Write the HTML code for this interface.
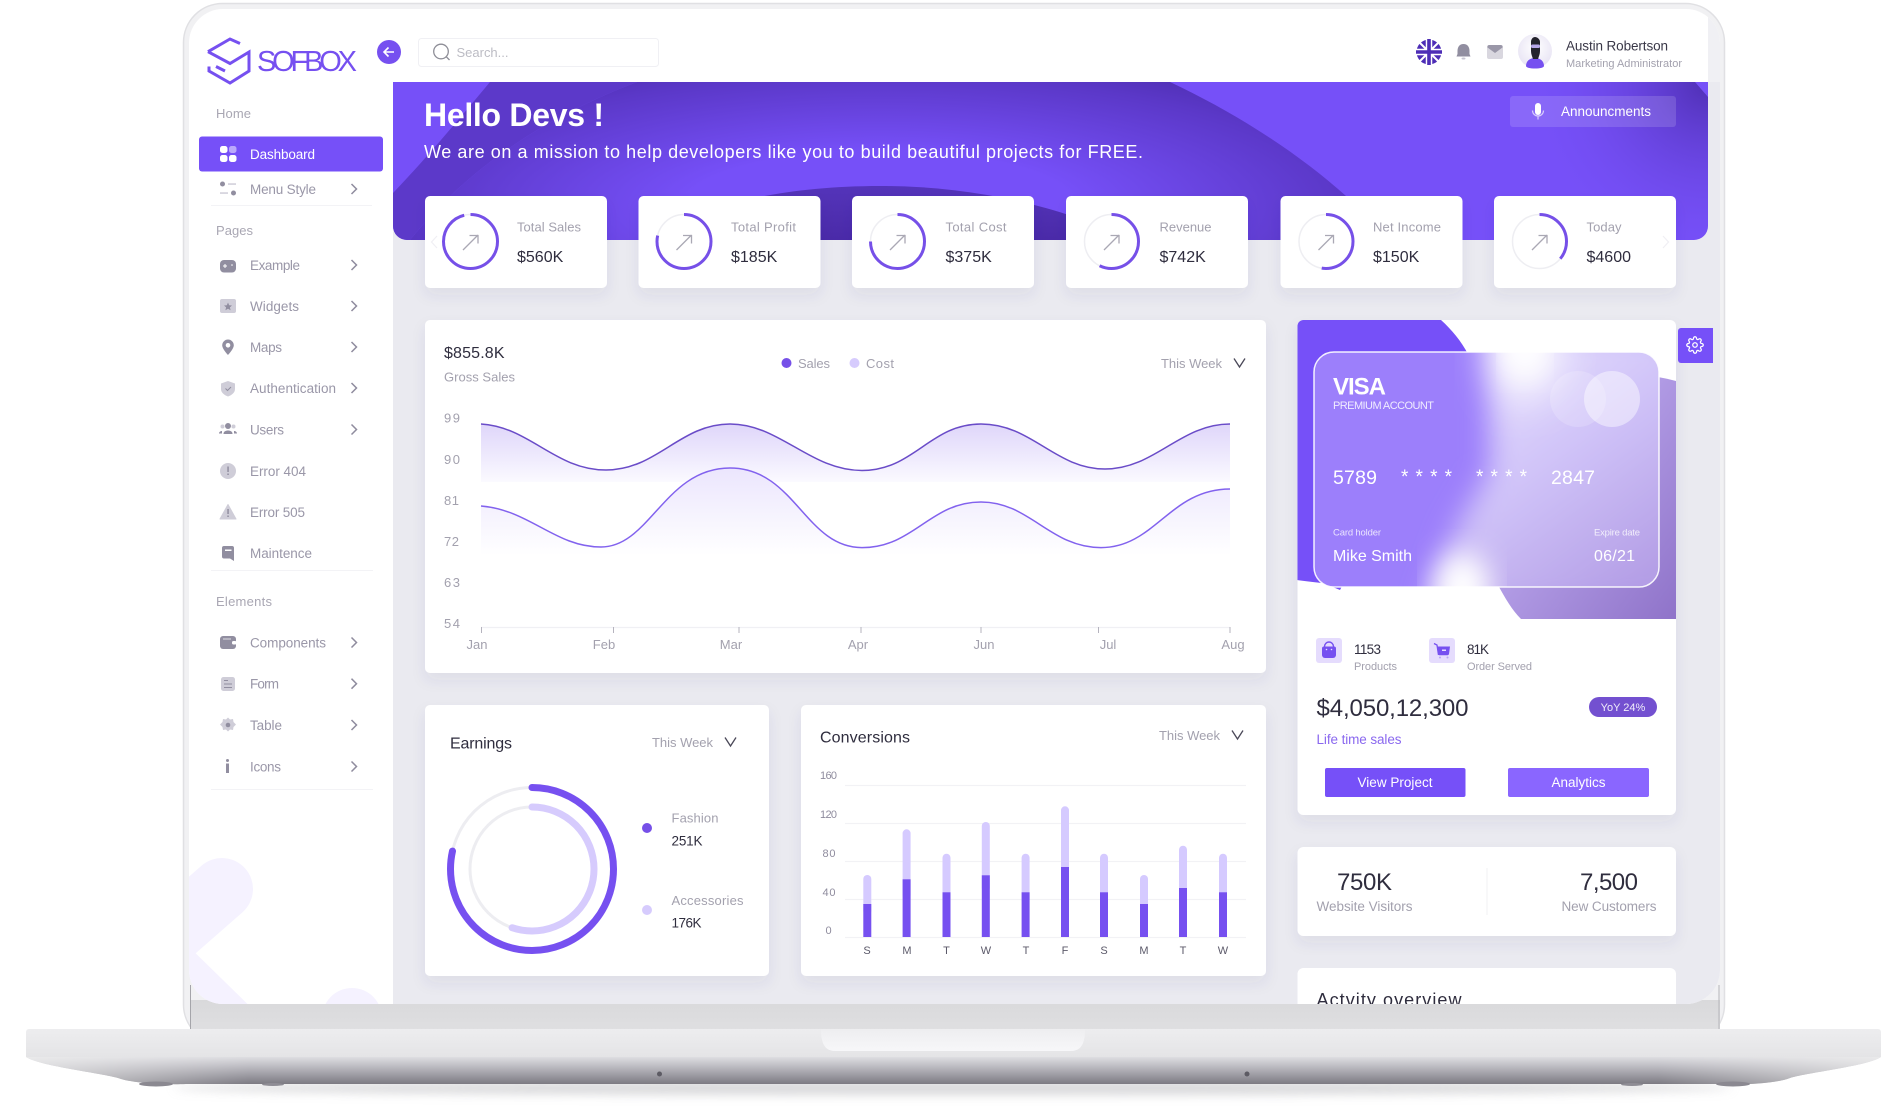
<!DOCTYPE html>
<html lang="en"><head><meta charset="utf-8"><title>Sofbox Dashboard</title>
<style>
html,body{margin:0;padding:0;background:#fff;width:1887px;height:1106px;overflow:hidden}
svg{display:block;filter:blur(.3px)}
text{font-family:"Liberation Sans",sans-serif}
.h{font-size:13px;fill:#a9a7b3}
.m{font-size:13.5px;fill:#9a97a8}
.g{font-size:13px;fill:#a3a1ae}
.d{font-size:16px;fill:#2f2d3e}
.w{fill:#fff}
.ch{fill:none;stroke:#8f8c9e;stroke-width:1.5}
.ic{fill:#918ea0}
.il{fill:#cfcdd8}
.ar{fill:none;stroke:#aaa8b4;stroke-width:1.3}
.mid{text-anchor:middle}
</style></head><body>
<svg width="1887" height="1106" viewBox="0 0 1887 1106" xmlns="http://www.w3.org/2000/svg">
<defs>
<filter id="sh" x="-20%" y="-20%" width="140%" height="150%"><feDropShadow dx="0" dy="7" stdDeviation="7" flood-color="#4c4c78" flood-opacity=".08"/></filter>
<filter id="b25" x="-60%" y="-60%" width="220%" height="220%"><feGaussianBlur stdDeviation="22"/></filter>
<filter id="b15" x="-30%" y="-30%" width="160%" height="160%"><feGaussianBlur stdDeviation="14"/></filter>
<filter id="b6" x="-10%" y="-100%" width="120%" height="300%"><feGaussianBlur stdDeviation="5"/></filter>
<clipPath id="screen"><rect x="189" y="9" width="1531" height="995" rx="34"/></clipPath>
<clipPath id="scr2"><rect x="170" y="0" width="1560" height="1004"/></clipPath>
<clipPath id="ban"><path d="M393 82H1708V226a14 14 0 0 1-14 14H407a14 14 0 0 1-14-14Z"/></clipPath>
<clipPath id="cardc"><rect x="1297.5" y="320" width="378.5" height="495" rx="6"/></clipPath>
<clipPath id="glass"><rect x="1314" y="352" width="345" height="235" rx="20"/></clipPath>
<radialGradient id="domeG" gradientUnits="userSpaceOnUse" cx="0" cy="0" r="1" gradientTransform="translate(880 205) scale(640 180)">
<stop offset="0" stop-color="#7650f8"/><stop offset=".3" stop-color="#7650f8"/><stop offset=".72" stop-color="#5b38c8"/><stop offset="1" stop-color="#43269e"/></radialGradient>
<radialGradient id="cornerG" gradientUnits="userSpaceOnUse" cx="1708" cy="82" r="185">
<stop offset="0" stop-color="#4f2fb4"/><stop offset="1" stop-color="#7650f8" stop-opacity="0"/></radialGradient>
<linearGradient id="dome2" x1="0" y1="0" x2="0" y2="1"><stop offset="0" stop-color="#5434ba"/><stop offset="1" stop-color="#4a2aa8"/></linearGradient>
<linearGradient id="rs" x1="0" y1="0" x2="1" y2="1"><stop offset="0" stop-color="#cdbcfb"/><stop offset="1" stop-color="#8f73c9"/></linearGradient>
<linearGradient id="grad1" gradientUnits="userSpaceOnUse" x1="0" y1="424" x2="0" y2="482"><stop offset="0" stop-color="#dfd6fa"/><stop offset="1" stop-color="#fbfaff"/></linearGradient>
<linearGradient id="grad2" gradientUnits="userSpaceOnUse" x1="0" y1="466" x2="0" y2="555"><stop offset="0" stop-color="#ebe5fd"/><stop offset="1" stop-color="#fff"/></linearGradient>
<linearGradient id="rz" x1="0" y1="0" x2=".7" y2="1"><stop offset="0" stop-color="#f0ecff"/><stop offset=".55" stop-color="#cfc2f8"/><stop offset="1" stop-color="#b39de5"/></linearGradient>
<linearGradient id="under" x1="0" y1="0" x2="0" y2="1"><stop offset="0" stop-color="#dcdce0"/><stop offset=".3" stop-color="#bcbbc2"/><stop offset="1" stop-color="#6e6c75"/></linearGradient>
<linearGradient id="underH" x1="0" y1="0" x2="1" y2="0"><stop offset="0" stop-color="#eee" stop-opacity=".75"/><stop offset=".12" stop-color="#eee" stop-opacity=".1"/><stop offset=".88" stop-color="#eee" stop-opacity=".1"/><stop offset="1" stop-color="#eee" stop-opacity=".75"/></linearGradient>
<linearGradient id="baseT" x1="0" y1="0" x2="0" y2="1"><stop offset="0" stop-color="#ededef"/><stop offset="1" stop-color="#e4e4e6"/></linearGradient>
<linearGradient id="notch" x1="0" y1="0" x2="0" y2="1"><stop offset="0" stop-color="#eeeef0"/><stop offset="1" stop-color="#f7f7f9"/></linearGradient>
<linearGradient id="chin" x1="0" y1="0" x2="0" y2="1"><stop offset="0" stop-color="#d9d9db"/><stop offset="1" stop-color="#dfdfe1"/></linearGradient>
<radialGradient id="av" cx=".5" cy=".4" r=".6"><stop offset="0" stop-color="#fff"/><stop offset="1" stop-color="#e8e4f4"/></radialGradient>
</defs>

<!-- base shadow -->
<ellipse cx="953" cy="1088" rx="780" ry="7" fill="#b8b8bc" opacity=".55" filter="url(#b6)"/>

<!-- lid -->
<rect x="183.5" y="3.5" width="1541" height="1040" rx="39" fill="#f1f1f3" stroke="#e0e0e3" stroke-width="1.5"/>
<rect x="190" y="1000" width="1530" height="30" fill="url(#chin)"/>
<line x1="190.500" y1="985" x2="190.500" y2="1030" stroke="#a5a5aa" stroke-width="1"/>
<line x1="1719" y1="985" x2="1719" y2="1030" stroke="#b5b5ba" stroke-width="1"/>

<!-- screen -->
<g clip-path="url(#screen)">
<rect x="189" y="9" width="1531" height="995" fill="#fff"/>
<rect x="393" y="82" width="1327" height="922" fill="#eaeaf0"/>
<rect x="1708" y="9" width="12" height="73" fill="#f0f0f4"/>
<polyline points="222,889 150,952 240,1040" fill="none" stroke="#f5f2ff" stroke-width="62" stroke-linecap="round" stroke-linejoin="miter" clip-path="url(#sidec)"/>
<circle cx="352" cy="1018" r="30" fill="#f5f2ff"/>
<rect x="393" y="900" width="8" height="110" fill="#eaeaf0"/>

<!-- banner -->
<g clip-path="url(#ban)">
<rect x="393" y="82" width="1315" height="158" fill="#7650f8"/>
<path d="M490 82C450 130 420 165 393 193V240H410C470 165 550 115 637 82Z" fill="#5c39c9"/>
<path d="M637 82H1170C1240 115 1300 155 1346 196V240H410C470 165 550 115 637 82Z" fill="url(#domeG)"/>
<path d="M640 240C680 215 760 186 880 186C970 186 1060 205 1130 240Z" fill="url(#dome2)"/>
<rect x="1500" y="82" width="208" height="158" fill="url(#cornerG)"/>
<path d="M1695 82H1708V97Z" fill="#7650f8"/>
</g>
<text x="424" y="126" class="w" font-size="32" font-weight="700" textLength="180">Hello Devs !</text>
<text x="424" y="158" class="w" font-size="18" textLength="719">We are on a mission to help developers like you to build beautiful projects for FREE.</text>
<rect x="1510" y="96" width="166" height="31" rx="3" fill="#fff" opacity=".14"/>
<rect x="1535" y="103" width="6" height="12" rx="3" fill="#fff"/>
<path d="M1532.500 110.500a5.500 5.500 0 0 0 11 0M1538 116v3.500" fill="none" stroke="#d8cdfc" stroke-width="1.200"/>
<text x="1561" y="116" class="w" font-size="13.5" textLength="90">Announcments</text>

<!-- stat cards -->
<g fill="#fff" filter="url(#sh)">
<rect x="425" y="196" width="182" height="92" rx="5"/>
<rect x="638.500" y="196" width="182" height="92" rx="5"/>
<rect x="852" y="196" width="182" height="92" rx="5"/>
<rect x="1066" y="196" width="182" height="92" rx="5"/>
<rect x="1280.500" y="196" width="182" height="92" rx="5"/>
<rect x="1494" y="196" width="182" height="92" rx="5"/>
</g>
<g fill="none" stroke="#eeeef2" stroke-width="1.500">
<circle cx="470.500" cy="241.500" r="27"/><circle cx="684" cy="241.500" r="27"/><circle cx="897.500" cy="241.500" r="27"/><circle cx="1111.500" cy="241.500" r="27"/><circle cx="1326" cy="241.500" r="27"/><circle cx="1539.500" cy="241.500" r="27"/>
</g>
<g fill="none" stroke="#7650e8" stroke-width="3">
<circle cx="470.500" cy="241.500" r="27" stroke-dasharray="163 170" transform="rotate(-90 470.500 241.500)"/>
<circle cx="684" cy="241.500" r="27" stroke-dasharray="133 170" transform="rotate(-90 684 241.500)"/>
<circle cx="897.500" cy="241.500" r="27" stroke-dasharray="127 170" transform="rotate(-90 897.500 241.500)"/>
<circle cx="1111.500" cy="241.500" r="27" stroke-dasharray="97 170" transform="rotate(-90 1111.500 241.500)"/>
<circle cx="1326" cy="241.500" r="27" stroke-dasharray="89 170" transform="rotate(-90 1326 241.500)"/>
<circle cx="1539.500" cy="241.500" r="27" stroke-dasharray="61 170" transform="rotate(-90 1539.500 241.500)"/>
</g>
<g class="ar">
<path d="M463 250 478 235M469.500 235.500H478V243.500"/>
<path d="M676.500 250 691.500 235M683 235.500H691.500V243.500"/>
<path d="M890 250 905 235M896.500 235.500H905V243.500"/>
<path d="M1104 250 1119 235M1110.500 235.500H1119V243.500"/>
<path d="M1318.500 250 1333.500 235M1325 235.500H1333.500V243.500"/>
<path d="M1532 250 1547 235M1538.500 235.500H1547V243.500"/>
</g>
<path d="M437 236 431.500 242 437 248" fill="none" stroke="#f0eff4" stroke-width="1.200"/>
<path d="M1663 236 1668.500 242 1663 248" fill="none" stroke="#f0eff4" stroke-width="1.200"/>
<text x="517" y="231.500" class="g" textLength="64">Total Sales</text><text x="517" y="262" class="d">$560K</text>
<text x="731" y="231.500" class="g" textLength="65">Total Profit</text><text x="731" y="262" class="d">$185K</text>
<text x="945.500" y="231.500" class="g" textLength="61">Total Cost</text><text x="945.500" y="262" class="d">$375K</text>
<text x="1159.500" y="231.500" class="g" textLength="52">Revenue</text><text x="1159.500" y="262" class="d">$742K</text>
<text x="1373" y="231.500" class="g" textLength="68">Net Income</text><text x="1373" y="262" class="d">$150K</text>
<text x="1586.500" y="231.500" class="g" textLength="35">Today</text><text x="1586.500" y="262" class="d">$4600</text>

<!-- main chart -->
<rect x="425" y="320" width="841" height="353" rx="5" fill="#fff" filter="url(#sh)"/>
<text x="444" y="358" class="d" textLength="60.500">$855.8K</text>
<text x="444" y="381.500" class="g" textLength="71">Gross Sales</text>
<circle cx="786.500" cy="363" r="5" fill="#7650e8"/><text x="798" y="368" class="g" textLength="32">Sales</text>
<circle cx="854.500" cy="363" r="5" fill="#d6cbfd"/><text x="866" y="368" class="g" textLength="28">Cost</text>
<text x="1161" y="368" class="g" textLength="61">This Week</text>
<path d="M1234 358.500 1239.500 367 1245 358.500" fill="none" stroke="#4a4858" stroke-width="1.300"/>
<g class="g"><text x="444" y="422.500" textLength="16">99</text><text x="444" y="464" textLength="16">90</text><text x="444" y="505" textLength="15">81</text><text x="444" y="546" textLength="15">72</text><text x="444" y="587" textLength="16">63</text><text x="444" y="628" textLength="16">54</text></g>
<path d="M481 482V424C530 427 555 470 606 470C657 470 680 424 730 424C780 424 810 470.500 862 470.500C914 470.500 930 424 981 424C1032 424 1055 469 1105 469C1155 469 1180 424 1230 424V482Z" fill="url(#grad1)"/>
<path d="M481 555V506C530 510 555 547 601 547C650 547 665 468 730 468C795 468 805 547.600 862 547.600C914 547.600 930 502 981 502C1030 502 1050 547.600 1101 547.600C1155 547.600 1170 489 1230 489V555Z" fill="url(#grad2)"/>
<path d="M481 424C530 427 555 470 606 470C657 470 680 424 730 424C780 424 810 470.500 862 470.500C914 470.500 930 424 981 424C1032 424 1055 469 1105 469C1155 469 1180 424 1230 424" fill="none" stroke="#6a4cc8" stroke-width="1.500"/>
<path d="M481 506C530 510 555 547 601 547C650 547 665 468 730 468C795 468 805 547.600 862 547.600C914 547.600 930 502 981 502C1030 502 1050 547.600 1101 547.600C1155 547.600 1170 489 1230 489" fill="none" stroke="#8262ee" stroke-width="1.500"/>
<line x1="481" y1="627.500" x2="1230" y2="627.500" stroke="#f0f0f4" stroke-width="1.200"/>
<path d="M481.500 627v6M613.500 627v6M739 627v6M861 627v6M981 627v6M1098.500 627v6M1230 627v6" stroke="#b5b3be" stroke-width="1"/>
<g class="g mid"><text x="477" y="649">Jan</text><text x="604" y="649">Feb</text><text x="731" y="649">Mar</text><text x="858" y="649">Apr</text><text x="984" y="649">Jun</text><text x="1108" y="649">Jul</text><text x="1233" y="649">Aug</text></g>

<!-- earnings -->
<rect x="425" y="705" width="344" height="271" rx="5" fill="#fff" filter="url(#sh)"/>
<text x="450" y="748.500" class="d" font-weight="400" textLength="62">Earnings</text>
<text x="652" y="747" class="g" textLength="61">This Week</text>
<path d="M725 737.500 730.500 746 736 737.500" fill="none" stroke="#4a4858" stroke-width="1.300"/>
<circle cx="532" cy="869" r="81.500" fill="none" stroke="#ededf1" stroke-width="3"/>
<circle cx="532" cy="869" r="81.500" fill="none" stroke="#7650f0" stroke-width="7" stroke-linecap="round" stroke-dasharray="402 520" transform="rotate(-90 532 869)"/>
<circle cx="532" cy="869" r="62" fill="none" stroke="#ededf1" stroke-width="3"/>
<circle cx="532" cy="869" r="62" fill="none" stroke="#d6cbfd" stroke-width="7" stroke-linecap="round" stroke-dasharray="215 400" transform="rotate(-90 532 869)"/>
<circle cx="647" cy="828" r="5" fill="#7650e8"/><circle cx="647" cy="910" r="5" fill="#d6cbfd"/>
<text x="671.500" y="822.500" class="g" textLength="47">Fashion</text>
<text x="671.500" y="845.500" font-size="13.500" fill="#2f2d3e" textLength="31">251K</text>
<text x="671.500" y="905" class="g" textLength="72">Accessories</text>
<text x="671.500" y="927.500" font-size="13.500" fill="#2f2d3e" textLength="30">176K</text>

<!-- conversions -->
<rect x="801" y="705" width="465" height="271" rx="5" fill="#fff" filter="url(#sh)"/>
<text x="820" y="742.500" class="d" textLength="90">Conversions</text>
<text x="1159" y="740" class="g" textLength="61">This Week</text>
<path d="M1232 730.500 1237.500 739 1243 730.500" fill="none" stroke="#4a4858" stroke-width="1.300"/>
<g font-size="11" fill="#8f8c9e"><text x="820" y="779" textLength="17">160</text><text x="820" y="818" textLength="17">120</text><text x="822.500" y="857" textLength="13">80</text><text x="822.500" y="896" textLength="13">40</text><text x="825.500" y="934">0</text></g>
<path d="M845 785.500H1246M845 823.500H1246M845 861.500H1246M845 899.500H1246M845 937.500H1246" stroke="#f2f2f5" stroke-width="1.200"/>
<g fill="#d5caff">
<rect x="863.300" y="875" width="8" height="40" rx="4"/><rect x="902.600" y="829.300" width="8" height="70" rx="4"/><rect x="942.500" y="853.700" width="8" height="50" rx="4"/><rect x="981.800" y="822" width="8" height="70" rx="4"/><rect x="1021.600" y="853.700" width="8" height="50" rx="4"/><rect x="1061" y="806.300" width="8" height="80" rx="4"/><rect x="1100" y="853.700" width="8" height="50" rx="4"/><rect x="1140" y="875" width="8" height="40" rx="4"/><rect x="1179" y="845.700" width="8" height="60" rx="4"/><rect x="1219" y="853.700" width="8" height="50" rx="4"/>
</g>
<g fill="#7650f0">
<rect x="863.300" y="904" width="8" height="33"/><rect x="902.600" y="879.300" width="8" height="57.700"/><rect x="942.500" y="892.300" width="8" height="44.700"/><rect x="981.800" y="875.300" width="8" height="61.700"/><rect x="1021.600" y="892.300" width="8" height="44.700"/><rect x="1061" y="867" width="8" height="70"/><rect x="1100" y="892.300" width="8" height="44.700"/><rect x="1140" y="904" width="8" height="33"/><rect x="1179" y="888" width="8" height="49"/><rect x="1219" y="892.300" width="8" height="44.700"/>
</g>
<g font-size="11" fill="#5c5a6a" class="mid"><text x="867" y="954">S</text><text x="907" y="954">M</text><text x="946.500" y="954">T</text><text x="986" y="954">W</text><text x="1026" y="954">T</text><text x="1065" y="954">F</text><text x="1104" y="954">S</text><text x="1144" y="954">M</text><text x="1183" y="954">T</text><text x="1223" y="954">W</text></g>

<!-- right column -->
<rect x="1297.500" y="320" width="378.500" height="495" rx="6" fill="#fff" filter="url(#sh)"/>
<g clip-path="url(#cardc)">
<path d="M1297 320H1441C1452 330 1461 341 1468 354L1340 590 1323 583C1313 582 1305 581 1297 580Z" fill="#7650f8"/>
<path d="M1650 376C1660 377 1668 379 1676 381V619H1521C1512 610 1505 598 1498 585Z" fill="url(#rs)"/>
</g>
<g clip-path="url(#glass)">
<rect x="1314" y="352" width="345" height="235" fill="#9c7ffb"/>
<path d="M1490 330H1690V610H1425L1455 530 1490 470Z" fill="url(#rz)" filter="url(#b15)"/>
<ellipse cx="1525" cy="345" rx="32" ry="52" fill="#fff" filter="url(#b25)"/>
<ellipse cx="1525" cy="345" rx="18" ry="30" fill="#fff" filter="url(#b15)"/>
<ellipse cx="1462" cy="590" rx="28" ry="38" fill="#fff" filter="url(#b15)"/>
<circle cx="1578" cy="399" r="28" fill="#fff" opacity=".18"/>
<circle cx="1612" cy="399" r="28" fill="#fff" opacity=".45"/>
</g>
<rect x="1314" y="352" width="345" height="235" rx="20" fill="none" stroke="#fff" stroke-opacity=".9" stroke-width="1.500"/>
<text x="1333" y="394.500" class="w" font-size="24" font-weight="700" textLength="53">VISA</text>
<text x="1333" y="409" class="w" font-size="11" fill-opacity=".85" textLength="101">PREMIUM ACCOUNT</text>
<text x="1333" y="484" class="w" font-size="19.500" textLength="44">5789</text>
<text x="1401" y="483" class="w" font-size="19" textLength="51">****</text>
<text x="1476" y="483" class="w" font-size="19" textLength="51">****</text>
<text x="1551" y="484" class="w" font-size="19.500" textLength="44">2847</text>
<text x="1333" y="535.500" class="w" font-size="9.500" fill-opacity=".8" textLength="48">Card holder</text>
<text x="1594" y="535.500" class="w" font-size="9.500" fill-opacity=".8" textLength="46">Expire date</text>
<text x="1333" y="561" class="w" font-size="16" textLength="79">Mike Smith</text>
<text x="1594" y="561" class="w" font-size="16" textLength="41">06/21</text>

<path d="M1681 328H1713V363H1681A3 3 0 0 1 1678 360V331A3 3 0 0 1 1681 328Z" fill="#7650f8"/>
<g transform="translate(1686 336) scale(.75)" fill="none" stroke="#fff" stroke-width="1.700" stroke-linejoin="round"><circle cx="12" cy="12" r="3"/><path d="M19.400 15a1.650 1.650 0 0 0 .33 1.820l.06.06a2 2 0 0 1 0 2.830 2 2 0 0 1-2.830 0l-.06-.06a1.650 1.650 0 0 0-1.820-.33 1.650 1.650 0 0 0-1 1.510V21a2 2 0 0 1-2 2 2 2 0 0 1-2-2v-.09A1.650 1.650 0 0 0 9 19.400a1.650 1.650 0 0 0-1.820.33l-.06.06a2 2 0 0 1-2.830 0 2 2 0 0 1 0-2.830l.06-.06a1.650 1.650 0 0 0 .33-1.820 1.650 1.650 0 0 0-1.510-1H3a2 2 0 0 1-2-2 2 2 0 0 1 2-2h.09A1.650 1.650 0 0 0 4.600 9a1.650 1.650 0 0 0-.33-1.820l-.06-.06a2 2 0 0 1 0-2.830 2 2 0 0 1 2.830 0l.06.06a1.650 1.650 0 0 0 1.820.33H9a1.650 1.650 0 0 0 1-1.510V3a2 2 0 0 1 2-2 2 2 0 0 1 2 2v.09a1.650 1.650 0 0 0 1 1.510 1.650 1.650 0 0 0 1.820-.33l.06-.06a2 2 0 0 1 2.830 0 2 2 0 0 1 0 2.830l-.06.06a1.650 1.650 0 0 0-.33 1.820V9a1.650 1.650 0 0 0 1.510 1H21a2 2 0 0 1 2 2 2 2 0 0 1-2 2h-.09a1.650 1.650 0 0 0-1.510 1z"/></g>

<rect x="1316" y="638" width="26" height="25" rx="3" fill="#e5dcfd"/>
<path d="M1324.500 646.500a4.500 4.500 0 0 1 9 0" fill="none" stroke="#7650f0" stroke-width="1.400"/>
<path d="M1324 646.500h10a2 2 0 0 1 2 2V655a3 3 0 0 1-3 3h-8a3 3 0 0 1-3-3v-6.500a2 2 0 0 1 2-2Z" fill="#7650f0"/>
<circle cx="1326.500" cy="649.500" r=".8" fill="#e5dcfd"/><circle cx="1331.500" cy="649.500" r=".8" fill="#e5dcfd"/>
<rect x="1429" y="638" width="26" height="25" rx="3" fill="#e5dcfd"/>
<path d="M1434 643.500 1437 645 1438.500 655" fill="none" stroke="#7650f0" stroke-width="1.300"/>
<path d="M1437 646.500H1450L1449 654a1.500 1.500 0 0 1-1.500 1.200H1439Z" fill="#7650f0"/>
<rect x="1442" y="649.500" width="4" height="1.500" fill="#e5dcfd"/>
<circle cx="1440" cy="657.500" r="1" fill="#b9a5f6"/><circle cx="1447.500" cy="657.500" r="1" fill="#b9a5f6"/>
<text x="1354" y="654" font-size="13.500" fill="#2f2d3e" textLength="27">1153</text>
<text x="1354" y="670" font-size="11" fill="#a3a1ae" textLength="43">Products</text>
<text x="1467" y="654" font-size="13.500" fill="#2f2d3e" textLength="22">81K</text>
<text x="1467" y="670" font-size="11" fill="#a3a1ae" textLength="65">Order Served</text>
<text x="1316.500" y="716" font-size="24" fill="#2f2d3e" textLength="152">$4,050,12,300</text>
<rect x="1589" y="697" width="68" height="20" rx="10" fill="#7350d0"/>
<text x="1623" y="711" class="w mid" font-size="11" fill-opacity=".9">YoY 24%</text>
<text x="1316.500" y="744" font-size="13.500" fill="#8a68ef" textLength="85">Life time sales</text>
<rect x="1325" y="768" width="140.500" height="29" rx="2" fill="#7650f8"/>
<text x="1395" y="787" class="w mid" font-size="13.500" textLength="75">View Project</text>
<rect x="1508" y="768" width="141" height="29" rx="2" fill="#8a66ff"/>
<text x="1578.500" y="787" class="w mid" font-size="13.500" textLength="54">Analytics</text>

<rect x="1297.500" y="847" width="378.500" height="89" rx="6" fill="#fff" filter="url(#sh)"/>
<text x="1364.500" y="890" class="mid" font-size="24" fill="#2f2d3e" textLength="55">750K</text>
<text x="1364.500" y="911" class="mid" font-size="13.500" fill="#a3a1ae" textLength="96">Website Visitors</text>
<rect x="1486.500" y="868" width="1" height="47" fill="#f0f0f3"/>
<text x="1609" y="890" class="mid" font-size="24" fill="#2f2d3e" textLength="58">7,500</text>
<text x="1609" y="911" class="mid" font-size="13.500" fill="#a3a1ae" textLength="95">New Customers</text>
<rect x="1297.500" y="968" width="378.500" height="60" rx="6" fill="#fff"/>
<text x="1316.500" y="1006" font-size="18" fill="#2f2d3e" textLength="145">Actvity overview</text>

<!-- header -->
<path d="M208 51.700 230 39 240 43.500M208 51.700 230 63.500 249 52V71L230 83 209 71V66.500M216 66.500 225 71" fill="none" stroke="#7650f0" stroke-width="3" stroke-linejoin="miter"/>
<text x="257" y="71" font-size="29" fill="#7650f0" textLength="100">SOFBOX</text>
<circle cx="389" cy="52" r="12" fill="#7650f0"/>
<path d="M394 52H384.500M388.500 47.500 384 52 388.500 56.500" fill="none" stroke="#fff" stroke-width="1.600"/>
<rect x="418.500" y="38.500" width="240" height="28" rx="3" fill="#fff" stroke="#f0f0f4"/>
<circle cx="441" cy="51.500" r="7.300" fill="none" stroke="#8e8e97" stroke-width="1.300"/><path d="M446.200 56.700 449.500 60" stroke="#8e8e97" stroke-width="1.300"/>
<text x="456.500" y="57" font-size="13" fill="#bcbcc4" textLength="52">Search...</text>

<g>
<circle cx="1429" cy="52" r="12.500" fill="#4d2db6"/>
<path d="M1420 43 1438 61M1438 43 1420 61" stroke="#fff" stroke-width="2"/>
<path d="M1429 39V65M1416 52H1442" stroke="#fff" stroke-width="6.500"/>
<path d="M1429 39V65M1416 52H1442" stroke="#4d2db6" stroke-width="3.600"/>
</g>
<path d="M1463.500 44c-4 0-6 3-6 7v3l-1 2.500h14l-1-2.500v-3c0-4-2-7-6-7Z" fill="#918ea0"/><ellipse cx="1463.500" cy="58.500" rx="2" ry="1" fill="#c8c6d2"/>
<rect x="1487" y="45" width="16" height="14" rx="2" fill="#d9d7df"/><path d="M1487.500 47.500 1495 53 1502.500 47.500V47a2 2 0 0 0-2-2h-11a2 2 0 0 0-2 2Z" fill="#9a97a8"/>
<circle cx="1535" cy="51" r="17" fill="url(#av)"/>
<path d="M1526 66c0-5 4-8 9-8s9 3 9 8c0 1.500-4 2.500-9 2.500s-9-1-9-2.500Z" fill="#7650f0"/>
<path d="M1531 42c0-3 2-5 4-5s5 2 5 5v9c0 3-1 5-2 8h-5c-1-3-2-5-2-8Z" fill="#23222c"/>
<rect x="1531" y="44.500" width="9" height="3.500" rx="1.500" fill="#b6a6e8"/>

<text x="1566" y="50.500" font-size="13.500" fill="#3a3848" textLength="102">Austin Robertson</text>
<text x="1566" y="67" font-size="11" fill="#a3a1ae" textLength="116">Marketing Administrator</text>

<!-- sidebar -->
<text x="216" y="118" class="h" textLength="35">Home</text>
<rect x="199" y="136.500" width="184" height="35" rx="3" fill="#7650f8"/>
<g fill="#fff"><rect x="220" y="146" width="7.500" height="7" rx="2.500"/><rect x="229" y="146" width="7.500" height="7" rx="2.500" opacity=".5"/><rect x="220" y="155" width="7.500" height="7" rx="2.500"/><rect x="229" y="155" width="7.500" height="7" rx="2.500"/></g>
<text x="250" y="159" class="w" font-size="13.500" textLength="65">Dashboard</text>

<circle cx="222.500" cy="184" r="2.500" class="ic"/><rect x="228" y="183.300" width="8" height="1.500" class="il"/><rect x="220" y="192.300" width="8" height="1.500" class="il"/><circle cx="233.500" cy="193" r="2.500" class="ic"/>
<text x="250" y="194" class="m" textLength="66">Menu Style</text>
<path d="M351.500 184 356.500 189 351.500 194" class="ch"/>
<rect x="211" y="205" width="161" height="1" fill="#f3f3f6"/>

<text x="216" y="235" class="h" textLength="37">Pages</text>

<rect x="220" y="260" width="16" height="12.500" rx="4" class="ic"/><path d="M223 266h4M225 264v4" stroke="#fff" stroke-width="1"/><circle cx="232" cy="265" r=".8" fill="#fff"/>
<text x="250" y="270" class="m" textLength="50">Example</text><path d="M351.500 260 356.500 265 351.500 270" class="ch"/>

<rect x="220" y="299" width="16" height="14" rx="2" class="il"/><path d="M228 302.500l1.200 2.800 2.800.2-2.100 1.900.7 2.800-2.600-1.500-2.600 1.500.7-2.800-2.100-1.900 2.800-.2Z" class="ic"/>
<text x="250" y="311" class="m" textLength="49">Widgets</text><path d="M351.500 301 356.500 306 351.500 311" class="ch"/>

<path d="M228 339.500a5.800 5.800 0 0 0-5.800 5.800c0 3.800 5.800 9.700 5.800 9.700s5.800-5.900 5.800-9.700a5.800 5.800 0 0 0-5.800-5.800Z" class="ic"/><circle cx="228" cy="345.300" r="2.300" fill="#fff"/>
<text x="250" y="352" class="m" textLength="32">Maps</text><path d="M351.500 342 356.500 347 351.500 352" class="ch"/>

<path d="M228 381 235 383.500V389c0 3.500-3 6-7 7.500-4-1.500-7-4-7-7.500V383.500Z" class="il"/><path d="M225.500 388.500 227.500 390.500 231 387" fill="none" stroke="#918ea0" stroke-width="1"/>
<text x="250" y="393" class="m" textLength="86">Authentication</text><path d="M351.500 383 356.500 388 351.500 393" class="ch"/>

<ellipse cx="228" cy="426" rx="3" ry="3" class="ic"/><circle cx="222.500" cy="426.500" r="2" class="il"/><circle cx="233.500" cy="426.500" r="2" class="il"/><path d="M223.500 434c0-2.500 2-3.500 4.500-3.500s4.500 1 4.500 3.500Z" class="ic"/><path d="M219 433.500c0-1.500 1.500-2.500 3-2.500v2.500ZM237 433.500c0-1.500-1.500-2.500-3-2.500v2.500Z" class="ic"/>
<text x="250" y="434.500" class="m" textLength="34">Users</text><path d="M351.500 424.500 356.500 429.500 351.500 434.500" class="ch"/>

<circle cx="228" cy="471" r="8" class="il"/><rect x="227.300" y="466.500" width="1.500" height="5.500" fill="#918ea0"/><rect x="227.300" y="473.500" width="1.500" height="1.500" fill="#918ea0"/>
<text x="250" y="476" class="m" textLength="56">Error 404</text>

<path d="M228 504.500 236 519H220Z" class="il" stroke="#cfcdd8" stroke-linejoin="round"/><rect x="227.300" y="509" width="1.500" height="5" fill="#918ea0"/><rect x="227.300" y="515.500" width="1.500" height="1.500" fill="#918ea0"/>
<text x="250" y="517" class="m" textLength="55">Error 505</text>

<path d="M224 546h8a2 2 0 0 1 2 2v13l-4-2.500h-6a2 2 0 0 1-2-2V548a2 2 0 0 1 2-2Z" class="ic"/><rect x="225" y="549.500" width="6.500" height="1.500" fill="#fff"/>
<text x="250" y="558" class="m" textLength="62">Maintence</text>
<rect x="211" y="570" width="162" height="1" fill="#f3f3f6"/>

<text x="216" y="606" class="h" textLength="56">Elements</text>

<rect x="220" y="636" width="16" height="13" rx="3" class="ic"/><rect x="232" y="641" width="4.500" height="3.500" rx="1.500" fill="#fff"/><rect x="223" y="638.500" width="8" height="1" fill="#fff" opacity=".7"/>
<text x="250" y="647.500" class="m" textLength="76">Components</text><path d="M351.500 637.500 356.500 642.500 351.500 647.500" class="ch"/>

<rect x="221" y="677" width="14" height="14" rx="2.500" class="il"/><path d="M224 680.500h4M224 684h8M224 687.500h8" stroke="#918ea0" stroke-width="1"/>
<text x="250" y="688.500" class="m" textLength="29">Form</text><path d="M351.500 678.700 356.500 683.700 351.500 688.700" class="ch"/>

<path d="M228 717.500l2 2 3-.5.500 3 2.500 2.500-2.500 2.500-.5 3-3-.5-2 2-2-2-3 .5-.5-3-2.500-2.500 2.500-2.500.5-3 3 .5Z" class="il"/><circle cx="228" cy="725" r="2.300" class="ic"/>
<text x="250" y="730" class="m" textLength="32">Table</text><path d="M351.500 720 356.500 725 351.500 730" class="ch"/>

<circle cx="227.500" cy="760.500" r="1.500" class="ic"/><rect x="226" y="763.500" width="3" height="9.500" class="ic"/>
<text x="250" y="771.500" class="m" textLength="31">Icons</text><path d="M351.500 761.500 356.500 766.500 351.500 771.500" class="ch"/>
<rect x="211" y="789" width="162" height="1" fill="#f3f3f6"/>
</g>

<!-- keyboard base -->
<path d="M26 1057H1881C1868 1066 1810 1072 1790 1078C1775 1084 1740 1085 1720 1084H186C165 1085 130 1083 118 1078C95 1072 40 1066 26 1057Z" fill="url(#under)"/>
<path d="M26 1057H1881C1868 1066 1810 1072 1790 1078C1775 1084 1740 1085 1720 1084H186C165 1085 130 1083 118 1078C95 1072 40 1066 26 1057Z" fill="url(#underH)"/>
<ellipse cx="156" cy="1084" rx="17" ry="2.500" fill="#8b8991"/><ellipse cx="1733" cy="1084" rx="17" ry="2.500" fill="#8b8991"/>
<ellipse cx="273" cy="1084.500" rx="11" ry="1.500" fill="#8f8d95"/><ellipse cx="1632" cy="1084.500" rx="11" ry="1.500" fill="#8f8d95"/>
<circle cx="659.500" cy="1074" r="2.500" fill="#5d5b64"/><circle cx="1247" cy="1074" r="2.500" fill="#5d5b64"/>
<path d="M26 1032a3 3 0 0 1 3-3H1878a3 3 0 0 1 3 3V1057H26Z" fill="url(#baseT)"/>
<path d="M821 1029H1085C1085 1038 1084 1051 1071 1051H835C822 1051 821 1038 821 1029Z" fill="url(#notch)"/>
</svg>
</body></html>
